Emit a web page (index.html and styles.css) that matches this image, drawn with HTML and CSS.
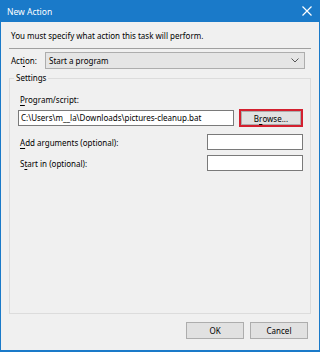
FILE: index.html
```html
<!DOCTYPE html>
<html>
<head>
    <title>New Action</title>
    <link rel="stylesheet" href="styles.css">
</head>
<body>
    <div class="window">
        <div class="titlebar">
            <span class="title">New Action</span>
            <svg class="close" width="10" height="10" viewBox="0 0 10 10">
                <path d="M0.5 0.5 L9.5 9.5 M9.5 0.5 L0.5 9.5" stroke="#fff" stroke-width="1.2" fill="none"/>
            </svg>
        </div>
        <div class="content">
            <div class="intro">You must specify what action this task will perform.</div>
            <div class="separator"></div>
            <div class="action-row">
                <span class="action-label">Act<u>i</u>on:</span>
                <div class="combo">
                    <span>Start a program</span>
                    <svg width="8" height="5" viewBox="0 0 8 5">
                        <path d="M0.5 0.5 L4 4 L7.5 0.5" stroke="#555" stroke-width="1" fill="none"/>
                    </svg>
                </div>
            </div>
            <fieldset class="settings">
                <legend>Settings</legend>
                <div class="field-label"><u>P</u>rogram/script:</div>
                <div class="program-row">
                    <div class="textbox wide">C:\Users\m__la\Downloads\pictures-cleanup.bat</div>
                    <div class="browse-wrap">
                        <div class="button browse">B<u>r</u>owse...</div>
                    </div>
                </div>
                <div class="option-row first">
                    <span><u>A</u>dd arguments (optional):</span>
                    <div class="textbox small"></div>
                </div>
                <div class="option-row">
                    <span>S<u>t</u>art in (optional):</span>
                    <div class="textbox small"></div>
                </div>
            </fieldset>
            <div class="buttons">
                <div class="button">OK</div>
                <div class="button">Cancel</div>
            </div>
        </div>
    </div>
</body>
</html>
```

FILE: styles.css
```css
body {
    margin: 0;
    font-family: "Noto Sans", sans-serif;
    font-size: 8px;
    color: #000;
}
u {
    text-decoration-thickness: 1px;
    text-underline-offset: 1.5px;
}
.window {
    width: 320px;
    height: 352px;
    box-sizing: border-box;
    border: 1px solid #1a7ac9;
    border-top: none;
    border-bottom-width: 2px;
    background: #f0f0f0;
    display: flex;
    flex-direction: column;
}
.titlebar {
    height: 22px;
    margin: 0 -1px;
    background: #1a7ac9;
    color: #fff;
    font-size: 8.5px;
    display: flex;
    align-items: center;
    justify-content: space-between;
    padding: 0 8px 0 7px;
}
.content {
    flex: 1;
    padding: 0 8px;
    display: flex;
    flex-direction: column;
}
.intro {
    margin-top: 8px;
    height: 12px;
    line-height: 12px;
    padding-left: 2px;
}
.separator {
    margin-top: 6px;
    height: 1px;
    background: #a0a0a0;
}
.action-row {
    margin-top: 3px;
    display: flex;
    align-items: center;
}
.action-label {
    width: 36px;
    box-sizing: border-box;
    padding-left: 2px;
}
.combo {
    flex: 1;
    margin-right: 6px;
    height: 17px;
    box-sizing: border-box;
    background: #e5e5e5;
    border: 1px solid #adadad;
    display: flex;
    align-items: center;
    justify-content: space-between;
    padding: 0 5px 0 3px;
}
.settings {
    margin: 3px 0 0;
    padding: 0 7px 0 8px;
    height: 242px;
    box-sizing: border-box;
    border: 1px solid #dcdcdc;
}
.settings legend {
    padding: 0 2px;
    margin-left: -4px;
    line-height: 12px;
}
.field-label {
    margin-top: 10px;
    line-height: 12px;
    padding-left: 2px;
}
.program-row {
    margin-top: 3px;
    display: flex;
    align-items: center;
    gap: 5px;
}
.textbox {
    height: 16px;
    box-sizing: border-box;
    background: #fff;
    border: 1px solid #7a7a7a;
    line-height: 14px;
    padding-left: 2px;
    white-space: nowrap;
    overflow: hidden;
}
.wide {
    width: 216px;
}
.small {
    width: 96px;
}
.browse-wrap {
    border: 2px solid #d3202f;
    height: 18px;
    width: 64px;
    box-sizing: border-box;
    display: flex;
}
.button {
    height: 17px;
    width: 58px;
    box-sizing: border-box;
    background: #e1e1e1;
    border: 1px solid #adadad;
    display: flex;
    align-items: center;
    justify-content: center;
}
.browse {
    flex: 1;
    height: auto;
}
.option-row {
    margin-top: 5px;
    display: flex;
    align-items: center;
    justify-content: space-between;
    padding-left: 2px;
}
.option-row.first {
    margin-top: 7px;
}
.buttons {
    margin-top: 8px;
    display: flex;
    justify-content: flex-end;
    gap: 6px;
    padding-right: 3px;
}
```
